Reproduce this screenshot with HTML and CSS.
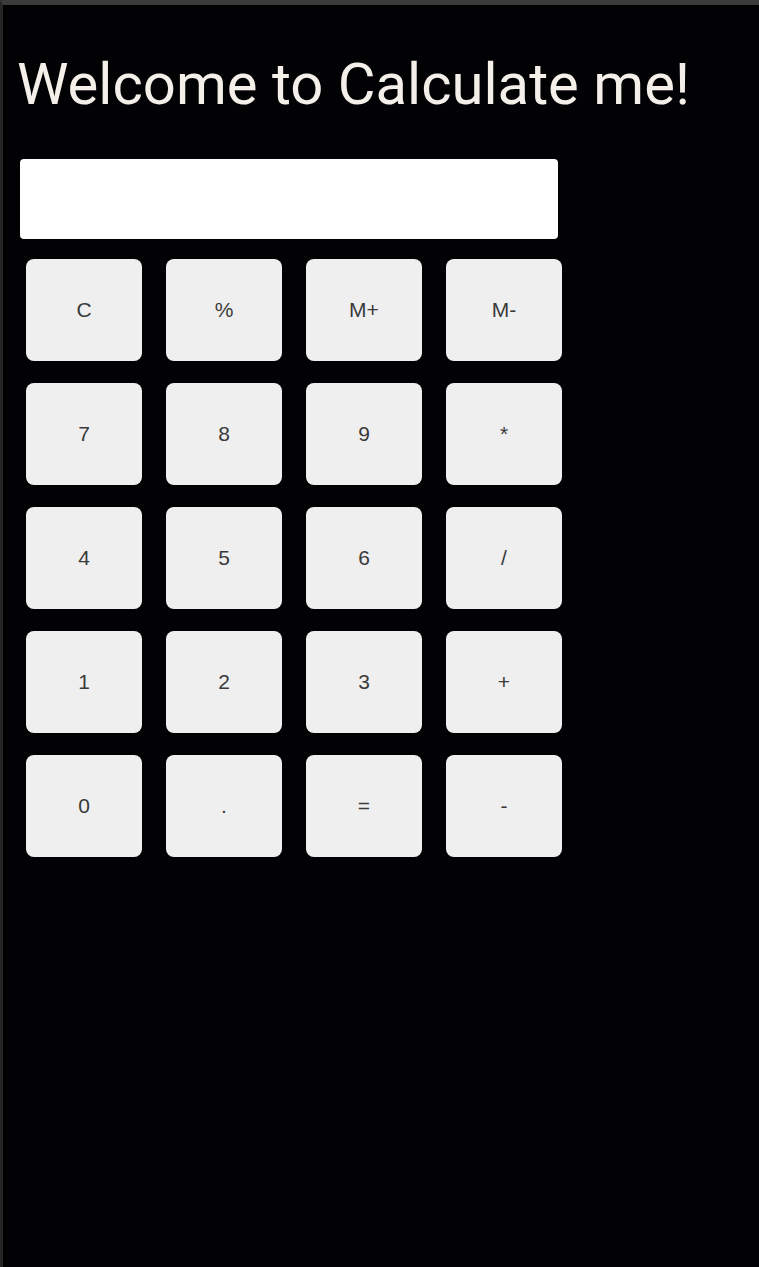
FILE: index.html
```html
<!DOCTYPE html>
<html>
<head>
<meta charset="utf-8">
<link rel="stylesheet" href="styles.css">
</head>
<body>
<div class="frame">
  <h1 class="title">Welcome to Calculate me!</h1>
  <div class="display"></div>
  <div class="keys">
    <button class="key">C</button>
    <button class="key">%</button>
    <button class="key">M+</button>
    <button class="key">M-</button>
    <button class="key">7</button>
    <button class="key">8</button>
    <button class="key">9</button>
    <button class="key">*</button>
    <button class="key">4</button>
    <button class="key">5</button>
    <button class="key">6</button>
    <button class="key">/</button>
    <button class="key">1</button>
    <button class="key">2</button>
    <button class="key">3</button>
    <button class="key">+</button>
    <button class="key">0</button>
    <button class="key">.</button>
    <button class="key">=</button>
    <button class="key">-</button>
  </div>
</div>
</body>
</html>
```
FILE: styles.css
```css
html, body {
  margin: 0;
  padding: 0;
  background: #000;
  height: 100%;
}
.frame {
  box-sizing: border-box;
  min-height: 100%;
  border-top: 5px solid #3b3b3b;
  border-left: 3px solid #262626;
  background: #020104;
  padding: 46px 0 0 14px;
}
.title {
  margin: 0;
  font-family: Roboto, "Liberation Sans", sans-serif;
  font-weight: 400;
  font-size: 58px;
  line-height: 66px;
  color: #f4efe9;
  letter-spacing: 0;
}
.display {
  margin-top: 42px;
  margin-left: 3px;
  width: 538px;
  height: 80px;
  background: #fff;
  border-radius: 4px;
}
.keys {
  display: grid;
  grid-template-columns: repeat(4, 116px);
  grid-auto-rows: 102px;
  column-gap: 24px;
  row-gap: 22px;
  margin-top: 20px;
  margin-left: 9px;
}
.key {
  border: none;
  background: #efefef;
  border-radius: 8px;
  font-family: "Liberation Sans", Arial, sans-serif;
  font-size: 21px;
  color: #3a3a3a;
  padding: 0;
}
```
